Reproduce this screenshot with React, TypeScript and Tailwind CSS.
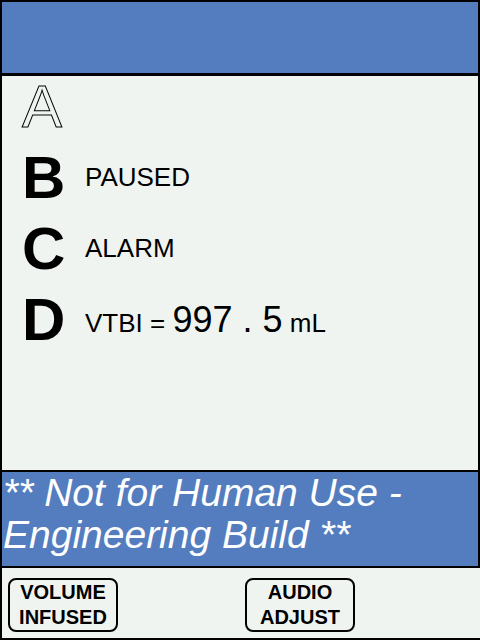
import React from "react";

const BLUE = "bg-[#537dbf]";

function StatusRow({ letter, children, outline }: { letter: string; children?: React.ReactNode; outline?: boolean }) {
  return (
    <div className="flex h-[60px] items-center">
      <div
        className={
          outline
            ? "w-[65px] pl-[2px] text-[60px] leading-[60px] text-transparent [-webkit-text-stroke:1px_black]"
            : "w-[65px] pl-[2px] text-[60px] font-bold leading-[60px] text-black"
        }
      >
        {letter}
      </div>
      <div className="text-black">{children}</div>
    </div>
  );
}

function SoftKey({ top, bottom }: { top: string; bottom: string }) {
  return (
    <div className="flex h-[54px] w-[110px] flex-col items-center justify-center rounded-[8px] border-2 border-black text-[20px] font-bold leading-[25px] text-black">
      <span>{top}</span>
      <span>{bottom}</span>
    </div>
  );
}

export default function App() {
  return (
    <div className="flex h-[640px] w-[480px] flex-col border-l-2 border-black bg-[#f0f4f1] font-['Liberation_Sans',Arial,sans-serif]">
      {/* title bar */}
      <div className={`h-[76px] shrink-0 border-t-2 border-r-2 border-b-[3px] border-black ${BLUE}`} />

      {/* status lines */}
      <div className="flex flex-1 flex-col gap-[11px] border-r-2 border-black pt-[1px] pl-[18px]">
        <StatusRow letter="A" outline />
        <StatusRow letter="B">
          <span className="text-[26px] leading-[26px]">PAUSED</span>
        </StatusRow>
        <StatusRow letter="C">
          <span className="text-[26px] leading-[26px]">ALARM</span>
        </StatusRow>
        <StatusRow letter="D">
          <span className="text-[26px]">
            VTBI = <span className="text-[36px]">997 . 5</span> mL
          </span>
        </StatusRow>
      </div>

      {/* build warning */}
      <div className={`h-[98px] shrink-0 border-y-2 border-r-2 border-black ${BLUE}`}>
        <p className="pl-[1px] text-[39px] italic leading-[42px] text-white">
          ** Not for Human Use - Engineering Build **
        </p>
      </div>

      {/* soft keys */}
      <div className="flex h-[72px] shrink-0 items-start gap-[127px] border-b-2 border-black pt-[10px] pl-[6px]">
        <SoftKey top="VOLUME" bottom="INFUSED" />
        <SoftKey top="AUDIO" bottom="ADJUST" />
      </div>
    </div>
  );
}
